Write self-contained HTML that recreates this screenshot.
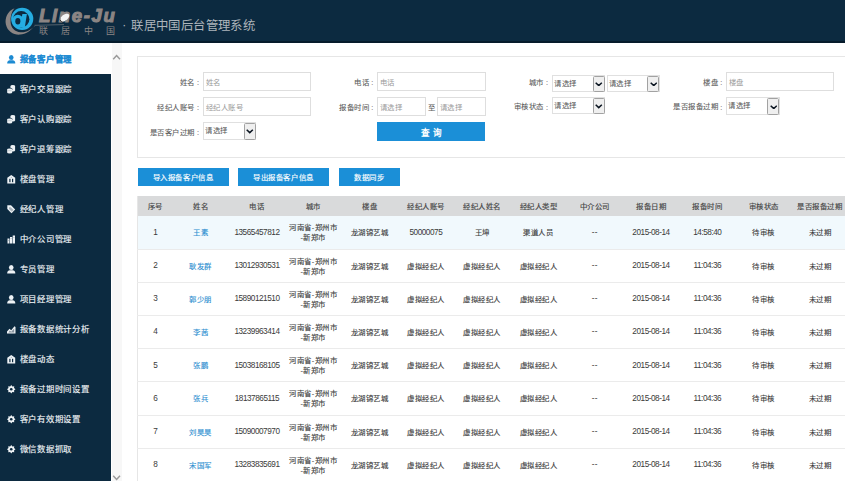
<!DOCTYPE html>
<html lang="zh-CN">
<head>
<meta charset="utf-8">
<style>
*{margin:0;padding:0;box-sizing:border-box}
html,body{width:845px;height:481px;overflow:hidden;background:#fff;font-family:"Liberation Sans",sans-serif;color:#333}
.abs{position:absolute}
#hdr{position:absolute;left:0;top:0;width:845px;height:43px;background:#0c2a40;border-bottom:2px solid #061b2b}
#side{position:absolute;left:0;top:43px;width:111px;height:438px;background:#0c2a40}
#track{position:absolute;left:112px;top:43px;width:9.8px;height:438px;background:#f7f7f7}
.mi{position:absolute;left:0;width:111px;height:30px;color:#eef2f5;-webkit-text-stroke:0.15px currentColor;font-size:8.4px;letter-spacing:0.8px;line-height:30px;padding-left:19px;white-space:nowrap}
.mi span{position:relative;top:0.3px;left:0.5px}
.mi svg{position:absolute;left:7.2px;top:11.2px;width:8.5px;height:8.5px}
.mi.on{background:#fff;color:#1c8ad2;font-weight:bold}
#form{position:absolute;left:137px;top:55.8px;width:720px;height:101.8px;border:1.2px solid #e6e6e6;background:#fff}
.lbl{position:absolute;font-size:7.4px;letter-spacing:0.5px;color:#5a5a5a;-webkit-text-stroke:0.08px #5a5a5a;white-space:nowrap;line-height:10px;height:10px}
.lbl i{position:absolute;font-style:normal;width:6px;text-align:center}
.inp{position:absolute;border:1px solid #dedede;background:#fff;font-size:7.4px;letter-spacing:0.5px;color:#9a9a9a;padding-left:1.7px;white-space:nowrap}
.sel{position:absolute;width:53.3px;letter-spacing:0.5px;height:17.3px;border:1px solid #e0e0e0;background:#fff;font-size:7.4px;color:#555;line-height:15.3px;padding-left:1px;white-space:nowrap}
.sel b{position:absolute;right:-0.5px;top:0px;width:12px;height:16.3px;background:#efefef;border:1px solid #a2a2a2;border-radius:1.5px}
.sel b svg{position:absolute;left:1.5px;top:5.2px;width:7.5px;height:4.5px}
.btn{position:absolute;background:#1b8fd7;color:#fff;-webkit-text-stroke:0.15px #fff;font-size:7.4px;letter-spacing:0.6px;text-align:center;white-space:nowrap}
table{position:absolute;left:137px;top:196px;width:711px;border-collapse:collapse;table-layout:fixed;font-size:7.4px;border-left:1px solid #e6e6e6}
th{height:20px;background:#d9dadb;color:#444;-webkit-text-stroke:0.15px #444;font-weight:normal;text-align:center;padding:0 0 1.5px 0;letter-spacing:0.5px}
td{height:33.2px;text-align:center;padding:1.5px 0 0 0;border-bottom:1px solid #ebebeb;color:#3a3a3a;-webkit-text-stroke:0.12px currentColor;line-height:10px}
tr.r1 td{background:#f1f9fd}
td.nm{color:#2b8ed0}
td.c{letter-spacing:0.5px;padding-top:1.6px}
td.cy{letter-spacing:0.5px;padding-top:1.7px}
td.d{font-size:8.2px;letter-spacing:-0.45px;-webkit-text-stroke:0;padding:0.6px 0 0 0}
</style>
</head>
<body>
<div id="hdr">
  <svg class="abs" style="left:0;top:0" width="130" height="42" viewBox="0 0 130 42">
    <path d="M14.5 8.2 C7.5 11 4.6 18 5.9 24.5 C7.5 31.5 13.5 35 20 34.6 C26 34.2 30.5 30.5 34.5 26.2 L36 25.2 C31 29.5 26.5 32.6 20.5 32.2 C15 31.8 11 28 10.6 22.5 C10.2 16.5 11.5 11.5 14.5 8.2Z" fill="#8b8584"/>
    <path d="M34.5 25.3 L64 24.6" stroke="#5a6670" stroke-width="0.9"/>
    <circle cx="22.2" cy="18.8" r="11.1" fill="#25ade2"/>
    <circle cx="21.2" cy="19.3" r="8.2" fill="#0c2a40"/>
    <ellipse cx="17.8" cy="21.2" rx="5.7" ry="6.5" fill="#25ade2"/>
    <ellipse cx="17.85" cy="21.15" rx="2.55" ry="3.25" fill="#0c2a40"/>
    <path d="M22.4 14.1 L26.9 14.1 L24.8 27.6 L19.6 27.6Z" fill="#25ade2"/>
  </svg>
  <div class="abs" style="left:39px;top:3.5px;font-size:18.5px;font-weight:bold;font-style:italic;color:#8b8584;letter-spacing:1.65px;line-height:24px;-webkit-text-stroke:1.1px #8b8584">Line-Ju</div>
  <div class="abs" style="left:58.5px;top:15px;width:10.5px;height:5.8px;border-radius:50%;background:#f4f4f4;transform:rotate(-38deg);border-left:1px solid #222"></div>
  <div class="abs" style="left:39px;top:25.5px;font-size:9px;color:#8b8584;letter-spacing:13.3px;line-height:10px;white-space:nowrap">联居中国</div>
  <div class="abs" style="left:122.3px;top:18.5px;font-size:12px;color:#aeb5bc;line-height:13px;white-space:nowrap">·</div>
  <div class="abs" style="left:131.3px;top:19.7px;font-size:12.4px;letter-spacing:0.4px;color:#aeb5bc;line-height:13px;white-space:nowrap">联居中国后台管理系统</div>
</div>
<div id="side">
<div class="mi on" style="top:0;height:31px;line-height:31px"><svg style="top:12.3px" viewBox="0 0 8.5 8.5"><ellipse cx="4.25" cy="2.6" rx="2.3" ry="2.5" fill="#1c8ad2"/><path d="M0.2 8.5 C0.2 5.6 1.8 5.2 4.25 5.2 C6.7 5.2 8.3 5.6 8.3 8.5Z" fill="#1c8ad2"/></svg><span style="top:0.6px">报备客户管理</span></div>
<div class="mi" style="top:31px"><svg viewBox="0 0 8.5 8.5"><g fill="#eef2f5"><ellipse cx="5.8" cy="1" rx="2.3" ry="0.9"/><rect x="3.5" y="1" width="4.6" height="4.6"/><ellipse cx="5.8" cy="5.6" rx="2.3" ry="0.9"/></g><ellipse cx="2.7" cy="4.2" rx="2.9" ry="1.2" fill="#0c2a40"/><g fill="#eef2f5"><ellipse cx="2.7" cy="4.3" rx="2.5" ry="0.9"/><rect x="0.2" y="4.3" width="5" height="3.2"/><ellipse cx="2.7" cy="7.5" rx="2.5" ry="0.9"/></g><rect x="0.8" y="5.6" width="3.8" height="0.5" fill="#9aa5ae"/></svg><span>客户交易跟踪</span></div>
<div class="mi" style="top:61px"><svg viewBox="0 0 8.5 8.5"><g fill="#eef2f5"><ellipse cx="5.8" cy="1" rx="2.3" ry="0.9"/><rect x="3.5" y="1" width="4.6" height="4.6"/><ellipse cx="5.8" cy="5.6" rx="2.3" ry="0.9"/></g><ellipse cx="2.7" cy="4.2" rx="2.9" ry="1.2" fill="#0c2a40"/><g fill="#eef2f5"><ellipse cx="2.7" cy="4.3" rx="2.5" ry="0.9"/><rect x="0.2" y="4.3" width="5" height="3.2"/><ellipse cx="2.7" cy="7.5" rx="2.5" ry="0.9"/></g><rect x="0.8" y="5.6" width="3.8" height="0.5" fill="#9aa5ae"/></svg><span>客户认购跟踪</span></div>
<div class="mi" style="top:91px"><svg viewBox="0 0 8.5 8.5"><g fill="#eef2f5"><ellipse cx="5.8" cy="1" rx="2.3" ry="0.9"/><rect x="3.5" y="1" width="4.6" height="4.6"/><ellipse cx="5.8" cy="5.6" rx="2.3" ry="0.9"/></g><ellipse cx="2.7" cy="4.2" rx="2.9" ry="1.2" fill="#0c2a40"/><g fill="#eef2f5"><ellipse cx="2.7" cy="4.3" rx="2.5" ry="0.9"/><rect x="0.2" y="4.3" width="5" height="3.2"/><ellipse cx="2.7" cy="7.5" rx="2.5" ry="0.9"/></g><rect x="0.8" y="5.6" width="3.8" height="0.5" fill="#9aa5ae"/></svg><span>客户退筹跟踪</span></div>
<div class="mi" style="top:121px"><svg viewBox="0 0 8.5 8.5"><path d="M4.25 0 L8.2 2.8 L8.2 8.5 L0.3 8.5 L0.3 2.8Z" fill="#eef2f5"/><rect x="2.3" y="3.8" width="1.2" height="3.4" fill="#0c2a40"/><rect x="5" y="3.8" width="1.2" height="3.4" fill="#0c2a40"/><circle cx="4.25" cy="2.3" r="0.5" fill="#8894a0"/></svg><span>楼盘管理</span></div>
<div class="mi" style="top:151px"><svg viewBox="0 0 8.5 8.5"><path d="M0.3 0.3 H4 L8.2 4.5 L4.5 8.2 L0.3 4Z" fill="#eef2f5"/><path d="M2 2.2 H3.6 L6.6 4.9 L4.7 6.8 L2 3.9Z" fill="#aab3bb"/></svg><span>经纪人管理</span></div>
<div class="mi" style="top:181px"><svg viewBox="0 0 8.5 8.5"><path d="M0.5 3.5h2v5h-2z M3 2h2.2v6.5h-2.2z M5.7 0.5h2.3v8h-2.3z" fill="#eef2f5"/><path d="M1 5h1v0.6h-1z M3.5 3.5h1.2v0.6h-1.2z M6.2 2h1.3v0.6h-1.3z" fill="#8894a0"/></svg><span>中介公司管理</span></div>
<div class="mi" style="top:211px"><svg viewBox="0 0 8.5 8.5"><ellipse cx="4.25" cy="2.6" rx="2.3" ry="2.5" fill="#eef2f5"/><path d="M0.2 8.5 C0.2 5.6 1.8 5.2 4.25 5.2 C6.7 5.2 8.3 5.6 8.3 8.5Z" fill="#eef2f5"/></svg><span>专员管理</span></div>
<div class="mi" style="top:241px"><svg viewBox="0 0 8.5 8.5"><ellipse cx="4.25" cy="2.6" rx="2.3" ry="2.5" fill="#eef2f5"/><path d="M0.2 8.5 C0.2 5.6 1.8 5.2 4.25 5.2 C6.7 5.2 8.3 5.6 8.3 8.5Z" fill="#eef2f5"/></svg><span>项目经理管理</span></div>
<div class="mi" style="top:271px"><svg viewBox="0 0 8.5 8.5"><path d="M0 8.5 L0 6.5 L2.5 3.8 L4.2 5.2 L7.5 1.2 L8.5 2 L8.5 8.5Z" fill="#eef2f5"/><path d="M1.5 7.5 L2.8 5.6 L4.2 6.8 L7.2 3.4 L7.2 7.5Z" fill="#8894a0"/></svg><span>报备数据统计分析</span></div>
<div class="mi" style="top:301px"><svg viewBox="0 0 8.5 8.5"><path d="M4.25 0 L8.2 2.8 L8.2 8.5 L0.3 8.5 L0.3 2.8Z" fill="#eef2f5"/><rect x="2.3" y="3.8" width="1.2" height="3.4" fill="#0c2a40"/><rect x="5" y="3.8" width="1.2" height="3.4" fill="#0c2a40"/><circle cx="4.25" cy="2.3" r="0.5" fill="#8894a0"/></svg><span>楼盘动态</span></div>
<div class="mi" style="top:331px"><svg viewBox="0 0 8.5 8.5"><path d="M4.25 0.00 L5.40 1.48 L7.26 1.24 L7.02 3.10 L8.50 4.25 L7.02 5.40 L7.26 7.26 L5.40 7.02 L4.25 8.50 L3.10 7.02 L1.24 7.26 L1.48 5.40 L0.00 4.25 L1.48 3.10 L1.24 1.24 L3.10 1.48Z" fill="#eef2f5"/><circle cx="4.25" cy="4.25" r="1.3" fill="#0c2a40"/></svg><span>报备过期时间设置</span></div>
<div class="mi" style="top:361px"><svg viewBox="0 0 8.5 8.5"><path d="M4.25 0.00 L5.40 1.48 L7.26 1.24 L7.02 3.10 L8.50 4.25 L7.02 5.40 L7.26 7.26 L5.40 7.02 L4.25 8.50 L3.10 7.02 L1.24 7.26 L1.48 5.40 L0.00 4.25 L1.48 3.10 L1.24 1.24 L3.10 1.48Z" fill="#eef2f5"/><circle cx="4.25" cy="4.25" r="1.3" fill="#0c2a40"/></svg><span>客户有效期设置</span></div>
<div class="mi" style="top:391px"><svg viewBox="0 0 8.5 8.5"><path d="M4.25 0.00 L5.40 1.48 L7.26 1.24 L7.02 3.10 L8.50 4.25 L7.02 5.40 L7.26 7.26 L5.40 7.02 L4.25 8.50 L3.10 7.02 L1.24 7.26 L1.48 5.40 L0.00 4.25 L1.48 3.10 L1.24 1.24 L3.10 1.48Z" fill="#eef2f5"/><circle cx="4.25" cy="4.25" r="1.3" fill="#0c2a40"/></svg><span>微信数据抓取</span></div>
</div>
<div id="track">
  <svg class="abs" style="left:0.2px;top:10.5px" width="9" height="6" viewBox="0 0 9 6"><path d="M1.2 5.2 L4.6 1.6 L8 5.2" fill="none" stroke="#9a9a9a" stroke-width="1.5"/></svg>
  <svg class="abs" style="left:0.2px;top:432px" width="9" height="6" viewBox="0 0 9 6"><path d="M1.2 0.8 L4.6 4.4 L8 0.8" fill="none" stroke="#9a9a9a" stroke-width="1.5"/></svg>
</div>
<div id="form"></div>
<div class="lbl" style="right:650.10px;top:77.70px">姓名</div><div class="lbl" style="left:195.20px;top:78.30px;width:6px;text-align:center">:</div>
<div class="inp" style="left:203px;top:72.4px;width:108px;height:18.4px;line-height:19.4px">姓名</div>
<div class="lbl" style="right:475.80px;top:77.70px">电话</div><div class="lbl" style="left:369.50px;top:78.30px;width:6px;text-align:center">:</div>
<div class="inp" style="left:377.3px;top:72.4px;width:108.7px;height:18.4px;line-height:19.4px">电话</div>
<div class="lbl" style="right:301.10px;top:77.70px">城市</div><div class="lbl" style="left:544.20px;top:78.30px;width:6px;text-align:center">:</div>
<div class="sel" style="left:552px;top:74.5px">请选择<b><svg viewBox="0 0 7.5 4.5"><path d="M0.7 0.7 L3.75 3.6 L6.8 0.7" fill="none" stroke="#0a1420" stroke-width="1.5"/></svg></b></div>
<div class="sel" style="left:606.7px;top:74.5px">请选择<b><svg viewBox="0 0 7.5 4.5"><path d="M0.7 0.7 L3.75 3.6 L6.8 0.7" fill="none" stroke="#0a1420" stroke-width="1.5"/></svg></b></div>
<div class="lbl" style="right:126.80px;top:77.70px">楼盘</div><div class="lbl" style="left:718.50px;top:78.30px;width:6px;text-align:center">:</div>
<div class="inp" style="left:726.3px;top:72.4px;width:108.2px;height:18.4px;line-height:19.4px">楼盘</div>
<div class="lbl" style="right:650.10px;top:102.60px">经纪人账号</div><div class="lbl" style="left:195.20px;top:103.20px;width:6px;text-align:center">:</div>
<div class="inp" style="left:203px;top:97.2px;width:108px;height:18.4px;line-height:19.4px">经纪人账号</div>
<div class="lbl" style="right:475.80px;top:102.60px">报备时间</div><div class="lbl" style="left:369.50px;top:103.20px;width:6px;text-align:center">:</div>
<div class="inp" style="left:377.3px;top:97.2px;width:48.3px;height:18.4px;line-height:19.4px">请选择</div>
<div class="inp" style="left:437px;top:97.2px;width:48.5px;height:18.4px;line-height:19.4px">请选择</div>
<div class="lbl" style="left:427.6px;top:102.8px">至</div>
<div class="lbl" style="right:301.10px;top:102.20px">审核状态</div><div class="lbl" style="left:544.20px;top:102.80px;width:6px;text-align:center">:</div>
<div class="sel" style="left:552px;top:97.2px">请选择<b><svg viewBox="0 0 7.5 4.5"><path d="M0.7 0.7 L3.75 3.6 L6.8 0.7" fill="none" stroke="#0a1420" stroke-width="1.5"/></svg></b></div>
<div class="lbl" style="right:126.80px;top:102.20px">是否报备过期</div><div class="lbl" style="left:718.50px;top:102.80px;width:6px;text-align:center">:</div>
<div class="sel" style="left:726.3px;top:97.4px">请选择<b><svg viewBox="0 0 7.5 4.5"><path d="M0.7 0.7 L3.75 3.6 L6.8 0.7" fill="none" stroke="#0a1420" stroke-width="1.5"/></svg></b></div>
<div class="lbl" style="right:650.10px;top:127.60px">是否客户过期</div><div class="lbl" style="left:195.20px;top:128.20px;width:6px;text-align:center">:</div>
<div class="sel" style="left:203px;top:122.3px">请选择<b><svg viewBox="0 0 7.5 4.5"><path d="M0.7 0.7 L3.75 3.6 L6.8 0.7" fill="none" stroke="#0a1420" stroke-width="1.5"/></svg></b></div>
<div class="btn" style="left:377.3px;top:122.3px;width:108px;height:18.7px;line-height:22.5px;font-weight:bold;font-size:8.6px;letter-spacing:3px;padding-left:3px;-webkit-text-stroke:0">查询</div>
<div class="btn" style="left:137.5px;top:167.6px;width:91px;height:18.3px;line-height:20.2px">导入报备客户信息</div>
<div class="btn" style="left:238px;top:167.6px;width:91px;height:18.3px;line-height:20.2px">导出报备客户信息</div>
<div class="btn" style="left:338.5px;top:167.6px;width:61.5px;height:18.3px;line-height:20.2px">数据同步</div>
<table>
<colgroup><col style="width:35px"><col style="width:56.3px"><col style="width:56.3px"><col style="width:56.3px"><col style="width:56.3px"><col style="width:56.3px"><col style="width:56.3px"><col style="width:56.3px"><col style="width:56.3px"><col style="width:56.3px"><col style="width:56.3px"><col style="width:56.3px"><col style="width:56.3px"></colgroup>
<tr><th>序号</th><th>姓名</th><th>电话</th><th>城市</th><th>楼盘</th><th>经纪人账号</th><th>经纪人姓名</th><th>经纪人类型</th><th>中介公司</th><th>报备日期</th><th>报备时间</th><th>审核状态</th><th>是否报备过期</th></tr>
<tr class="r1"><td class="d">1</td><td class="nm c">王素</td><td class="d">13565457812</td><td class="cy">河南省-郑州市<br>-新郑市</td><td class="c">龙湖锦艺城</td><td class="d">50000075</td><td class="c">王坤</td><td class="c">渠道人员</td><td class="d" style="letter-spacing:0.2px">--</td><td class="d">2015-08-14</td><td class="d">14:58:40</td><td class="c">待审核</td><td class="c">未过期</td></tr>
<tr><td class="d">2</td><td class="nm c">耿发群</td><td class="d">13012930531</td><td class="cy">河南省-郑州市<br>-新郑市</td><td class="c">龙湖锦艺城</td><td class="c">虚拟经纪人</td><td class="c">虚拟经纪人</td><td class="c">虚拟经纪人</td><td class="d" style="letter-spacing:0.2px">--</td><td class="d">2015-08-14</td><td class="d">11:04:36</td><td class="c">待审核</td><td class="c">未过期</td></tr>
<tr><td class="d">3</td><td class="nm c">郭少朋</td><td class="d">15890121510</td><td class="cy">河南省-郑州市<br>-新郑市</td><td class="c">龙湖锦艺城</td><td class="c">虚拟经纪人</td><td class="c">虚拟经纪人</td><td class="c">虚拟经纪人</td><td class="d" style="letter-spacing:0.2px">--</td><td class="d">2015-08-14</td><td class="d">11:04:36</td><td class="c">待审核</td><td class="c">未过期</td></tr>
<tr><td class="d">4</td><td class="nm c">李茜</td><td class="d">13239963414</td><td class="cy">河南省-郑州市<br>-新郑市</td><td class="c">龙湖锦艺城</td><td class="c">虚拟经纪人</td><td class="c">虚拟经纪人</td><td class="c">虚拟经纪人</td><td class="d" style="letter-spacing:0.2px">--</td><td class="d">2015-08-14</td><td class="d">11:04:36</td><td class="c">待审核</td><td class="c">未过期</td></tr>
<tr><td class="d">5</td><td class="nm c">张鹏</td><td class="d">15038168105</td><td class="cy">河南省-郑州市<br>-新郑市</td><td class="c">龙湖锦艺城</td><td class="c">虚拟经纪人</td><td class="c">虚拟经纪人</td><td class="c">虚拟经纪人</td><td class="d" style="letter-spacing:0.2px">--</td><td class="d">2015-08-14</td><td class="d">11:04:36</td><td class="c">待审核</td><td class="c">未过期</td></tr>
<tr><td class="d">6</td><td class="nm c">张兵</td><td class="d">18137865115</td><td class="cy">河南省-郑州市<br>-新郑市</td><td class="c">龙湖锦艺城</td><td class="c">虚拟经纪人</td><td class="c">虚拟经纪人</td><td class="c">虚拟经纪人</td><td class="d" style="letter-spacing:0.2px">--</td><td class="d">2015-08-14</td><td class="d">11:04:36</td><td class="c">待审核</td><td class="c">未过期</td></tr>
<tr><td class="d">7</td><td class="nm c">刘昊昊</td><td class="d">15090007970</td><td class="cy">河南省-郑州市<br>-新郑市</td><td class="c">龙湖锦艺城</td><td class="c">虚拟经纪人</td><td class="c">虚拟经纪人</td><td class="c">虚拟经纪人</td><td class="d" style="letter-spacing:0.2px">--</td><td class="d">2015-08-14</td><td class="d">11:04:36</td><td class="c">待审核</td><td class="c">未过期</td></tr>
<tr><td class="d">8</td><td class="nm c">宋国军</td><td class="d">13283835691</td><td class="cy">河南省-郑州市<br>-新郑市</td><td class="c">龙湖锦艺城</td><td class="c">虚拟经纪人</td><td class="c">虚拟经纪人</td><td class="c">虚拟经纪人</td><td class="d" style="letter-spacing:0.2px">--</td><td class="d">2015-08-14</td><td class="d">11:04:36</td><td class="c">待审核</td><td class="c">未过期</td></tr>
</table>
</body>
</html>
